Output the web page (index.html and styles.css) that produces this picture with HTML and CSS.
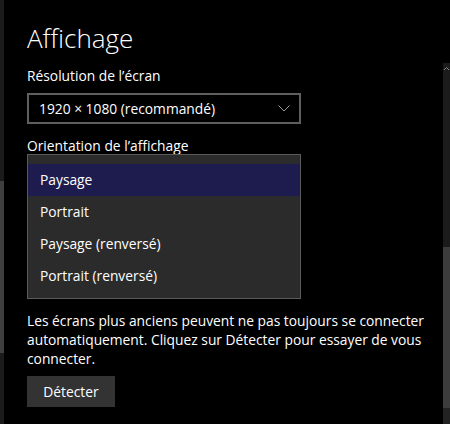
FILE: index.html
```html
<!DOCTYPE html>
<html lang="fr">
<head>
    <meta charset="UTF-8">
    <meta name="viewport" content="width=device-width, initial-scale=1.0">
    <title>Affichage</title>
    <link rel="stylesheet" href="styles.css">
</head>
<body>
    <div class="window">
        <div class="side-scroll">
            <div class="side-thumb"></div>
        </div>

        <main class="content">
            <h1 class="title">Affichage</h1>

            <div class="label">Résolution de l’écran</div>
            <div class="combo">
                <span>1920 × 1080 (recommandé)</span>
                <svg class="chevron" width="12" height="7" viewBox="0 0 12 7">
                    <polyline points="0.5,0.5 6,6 11.5,0.5" fill="none" stroke="#9a9a9a" stroke-width="1"/>
                </svg>
            </div>

            <div class="label label-tight">Orientation de l’affichage</div>
            <ul class="dropdown">
                <li class="option selected">Paysage</li>
                <li class="option">Portrait</li>
                <li class="option">Paysage (renversé)</li>
                <li class="option">Portrait (renversé)</li>
            </ul>

            <p class="note">Les écrans plus anciens peuvent ne pas toujours se connecter automatiquement. Cliquez sur Détecter pour essayer de vous connecter.</p>

            <button class="btn">Détecter</button>
        </main>

        <div class="scrollbar">
            <div class="scroll-arrow">
                <svg width="7" height="5" viewBox="0 0 7 5">
                    <polyline points="1,4 3.5,1.5 6,4" fill="none" stroke="#8a8a8a" stroke-width="1"/>
                </svg>
            </div>
            <div class="scroll-track"></div>
            <div class="scroll-thumb"></div>
            <div class="scroll-end"></div>
        </div>
    </div>
</body>
</html>
```

FILE: styles.css
```css
html, body {
    margin: 0;
    padding: 0;
    background-color: #000;
}
body {
    font-family: "Open Sans", "Noto Sans", sans-serif;
    color: #fff;
    width: 450px;
    height: 424px;
    overflow: hidden;
}
.window {
    display: grid;
    grid-template-columns: 4px 1fr 7px;
    height: 424px;
}

/* left pane edge */
.side-scroll {
    background-color: #1b1b1b;
    display: flex;
    flex-direction: column;
    padding-top: 181px;
}
.side-thumb {
    height: 172px;
    background-color: #3f3f3f;
}

.content {
    padding: 20px 0 0 23px;
    min-width: 0;
}
.title {
    margin: 0 0 10px;
    font-size: 26px;
    font-weight: 300;
    line-height: 36px;
}
.label {
    font-size: 13.8px;
    line-height: 20px;
    margin-bottom: 7px;
}
.label-tight {
    margin-top: 13px;
    line-height: 18px;
    margin-bottom: -1px;
}
.combo {
    box-sizing: border-box;
    width: 274px;
    height: 31px;
    border: 2px solid #5f5f5f;
    display: flex;
    align-items: center;
    justify-content: space-between;
    padding: 0 9px 0 10px;
    font-size: 13.8px;
}
.chevron {
    display: block;
}
.dropdown {
    box-sizing: border-box;
    list-style: none;
    margin: 0;
    width: 274px;
    padding: 9px 0 6px;
    background-color: #2b2b2b;
    border: 1px solid #5a5a5a;
    position: relative;
}
.option {
    height: 32px;
    line-height: 32px;
    padding-left: 12px;
    font-size: 13.8px;
}
.option.selected {
    background-color: #1e1c4e;
}
.note {
    margin: 12px 0 8px;
    max-width: 405px;
    font-size: 13.8px;
    line-height: 19px;
}
.btn {
    width: 88px;
    height: 31px;
    border: none;
    background-color: #333;
    color: #fff;
    font-family: inherit;
    font-size: 13.8px;
    padding: 0;
}

/* right scrollbar */
.scrollbar {
    display: flex;
    flex-direction: column;
    padding-top: 63px;
}
.scroll-arrow {
    height: 10px;
    background-color: #1b1b1b;
    display: flex;
    justify-content: center;
    align-items: center;
}
.scroll-track {
    height: 174px;
    background-color: #1b1b1b;
}
.scroll-thumb {
    height: 161px;
    background-color: #3c3c3c;
}
.scroll-end {
    flex: 1;
    background-color: #222;
}
```
